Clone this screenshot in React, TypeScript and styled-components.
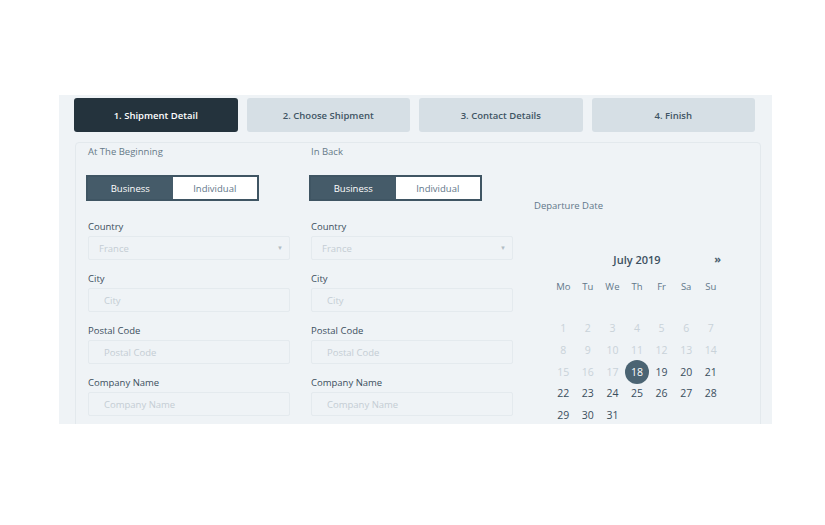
import React from "react";
import styled, { createGlobalStyle, css } from "styled-components";

const GlobalStyle = createGlobalStyle`
  html, body {
    margin: 0;
    padding: 0;
    background: #ffffff;
    font-family: "Open Sans", "Liberation Sans", sans-serif;
  }
  * { box-sizing: border-box; }
`;

const Page = styled.div`
  width: 825px;
  height: 525px;
  padding: 95px 0 0 59px;
`;

const Panel = styled.div`
  width: 713px;
  height: 329px;
  background: #eff3f6;
  overflow: hidden;
  padding: 3px 0 0 15px;
`;

const Steps = styled.div`
  width: 681px;
  display: flex;
  gap: 9px;
`;

const Step = styled.div<{ active?: boolean }>`
  flex: 1;
  height: 34px;
  border-radius: 3px;
  display: flex;
  align-items: center;
  justify-content: center;
  font-size: 9.5px;
  font-weight: 600;
  background: ${({ active }) => (active ? "#24333d" : "#d6dfe5")};
  color: ${({ active }) => (active ? "#ffffff" : "#3f5564")};
`;

const Card = styled.div`
  margin: 10px 0 0 1px;
  width: 686px;
  height: 300px;
  border: 1px solid #e3e9ed;
  border-radius: 4px;
  padding: 2px 12px 0;
  display: flex;
  gap: 21px;
`;

const Column = styled.div<{ width: number }>`
  width: ${({ width }) => width}px;
  display: flex;
  flex-direction: column;
`;

const Title = styled.div`
  font-size: 9.5px;
  line-height: 14px;
  color: #667a88;
`;

const Toggle = styled.div`
  margin: 16px 0 0 -2px;
  width: 173px;
  height: 26px;
  flex-shrink: 0;
  display: flex;
  border: 2px solid #3f5563;
  background: #ffffff;
`;

const ToggleOption = styled.div<{ active?: boolean }>`
  flex: 1;
  display: flex;
  align-items: center;
  justify-content: center;
  font-size: 9.5px;
  ${({ active }) =>
    active
      ? css`
          background: #455b69;
          color: #ffffff;
        `
      : css`
          background: #ffffff;
          color: #62788a;
        `}
`;

const Field = styled.div`
  margin-top: 19px;
  display: flex;
  flex-direction: column;
  flex-shrink: 0;
  & + & {
    margin-top: 12px;
  }
`;

const Label = styled.div`
  font-size: 9.5px;
  line-height: 14px;
  color: #3c4f5d;
  margin-bottom: 2px;
`;

const Box = styled.div<{ inset: number }>`
  height: 24px;
  border: 1px solid #e4eaee;
  border-radius: 2px;
  background: #eff3f6;
  display: flex;
  align-items: center;
  justify-content: space-between;
  padding: 0 6px 0 ${({ inset }) => inset}px;
  font-size: 9.5px;
  color: #c4cdd4;
`;

const Caret = styled.span`
  font-size: 6px;
  color: #b2bcc4;
`;

const DateTitle = styled.div`
  margin-top: 54px;
  font-size: 9.5px;
  line-height: 14px;
  color: #62778a;
`;

const Calendar = styled.div`
  margin: 36px 0 0 17px;
  width: 172px;
`;

const MonthRow = styled.div`
  position: relative;
  height: 20px;
  display: flex;
  align-items: center;
  justify-content: center;
  font-size: 11px;
  font-weight: 600;
  color: #3c5060;
`;

const NextArrow = styled.span`
  position: absolute;
  right: 2px;
  top: 2px;
  font-size: 11px;
  font-weight: 700;
  color: #4a6070;
`;

const Grid = styled.div<{ top: number }>`
  display: grid;
  grid-template-columns: repeat(7, 1fr);
  grid-auto-rows: 21.6px;
  margin-top: ${({ top }) => top}px;
`;

const WeekDay = styled.div`
  display: flex;
  align-items: center;
  justify-content: center;
  font-size: 9.5px;
  color: #62778a;
`;

const Day = styled.div<{ muted?: boolean; selected?: boolean }>`
  display: flex;
  align-items: center;
  justify-content: center;
  font-size: 10.5px;
  color: ${({ muted }) => (muted ? "#c9d2d9" : "#3a4e5d")};
  ${({ selected }) =>
    selected &&
    css`
      & > span {
        width: 24px;
        height: 24px;
        border-radius: 50%;
        background: #4b6473;
        color: #ffffff;
        display: flex;
        align-items: center;
        justify-content: center;
      }
    `}
`;

const steps = ["1. Shipment Detail", "2. Choose Shipment", "3. Contact Details", "4. Finish"];
const weekDays = ["Mo", "Tu", "We", "Th", "Fr", "Sa", "Su"];

const fields = [
  { label: "Country", value: "France", select: true },
  { label: "City", value: "City" },
  { label: "Postal Code", value: "Postal Code" },
  { label: "Company Name", value: "Company Name" },
];

const AddressColumn = ({ title }: { title: string }) => (
  <Column width={202}>
    <Title>{title}</Title>
    <Toggle>
      <ToggleOption active>Business</ToggleOption>
      <ToggleOption>Individual</ToggleOption>
    </Toggle>
    {fields.map((f) => (
      <Field key={f.label}>
        <Label>{f.label}</Label>
        <Box inset={f.select ? 10 : 15}>
          {f.value}
          {f.select && <Caret>▼</Caret>}
        </Box>
      </Field>
    ))}
  </Column>
);

export default function App() {
  const days = Array.from({ length: 31 }, (_, i) => i + 1);
  return (
    <>
      <GlobalStyle />
      <Page>
        <Panel>
          <Steps>
            {steps.map((s, i) => (
              <Step key={s} active={i === 0}>
                {s}
              </Step>
            ))}
          </Steps>
          <Card>
            <AddressColumn title="At The Beginning" />
            <AddressColumn title="In Back" />
            <Column width={214}>
              <DateTitle>Departure Date</DateTitle>
              <Calendar>
                <MonthRow>
                  July 2019
                  <NextArrow>»</NextArrow>
                </MonthRow>
                <Grid top={7}>
                  {weekDays.map((d) => (
                    <WeekDay key={d}>{d}</WeekDay>
                  ))}
                </Grid>
                <Grid top={20}>
                  {days.map((d) => (
                    <Day key={d} muted={d < 18} selected={d === 18}>
                      <span>{d}</span>
                    </Day>
                  ))}
                </Grid>
              </Calendar>
            </Column>
          </Card>
        </Panel>
      </Page>
    </>
  );
}
